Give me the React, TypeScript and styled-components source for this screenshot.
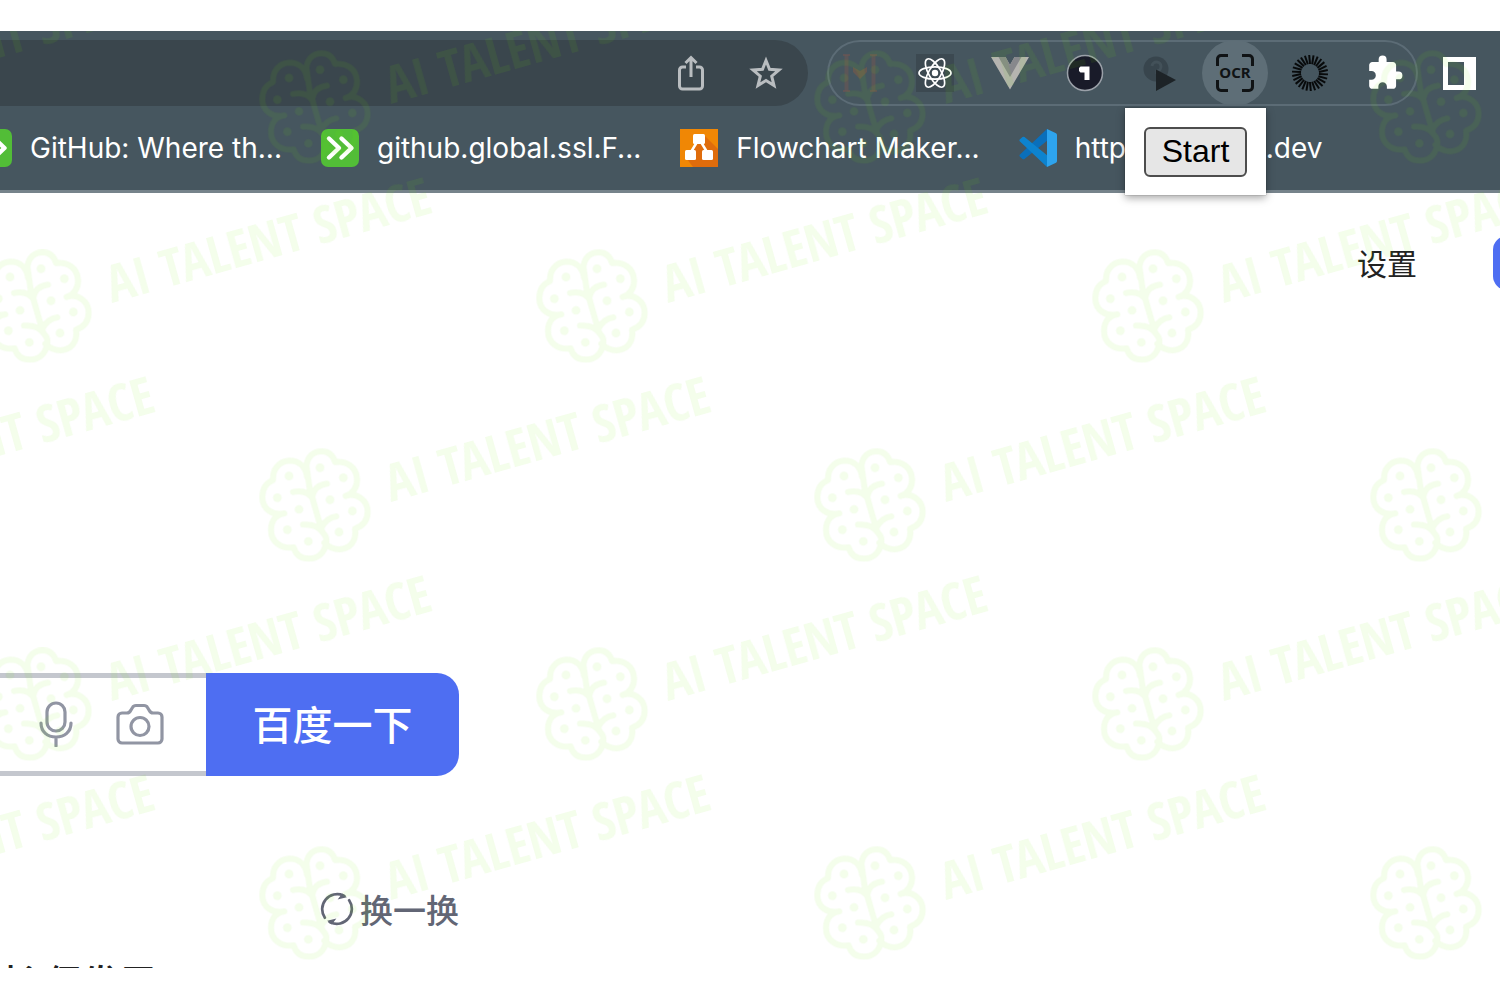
import React from "react";
import styled, { createGlobalStyle } from "styled-components";

const GlobalStyle = createGlobalStyle`
  *, *::before, *::after { box-sizing: border-box; }
  body { margin: 0; background: #fff; }
  button, input { font: inherit; }
  svg { display: block; flex: none; }
`;

const cjk = `"Noto Sans CJK SC", sans-serif`;

const Page = styled.div`
  height: 100vh;
  padding: 31px 0 32px;
  display: flex;
  overflow: hidden;
`;

const Viewport = styled.div`
  position: relative;
  flex: 1;
  min-width: 0;
  overflow: hidden;
  background: #fff;
`;

const BrowserChrome = styled.header`
  padding-top: 9px;
  background: #46565f;
  border-bottom: 3px solid #76838b;
`;

const ToolRow = styled.div`
  display: flex;
  align-items: center;
  padding-right: 24px;
`;

const AddressBar = styled.div`
  flex: 1;
  height: 66px;
  margin-right: 19px;
  padding-right: 25px;
  display: flex;
  align-items: center;
  justify-content: flex-end;
  gap: 45px;
  border-radius: 0 33px 33px 0;
  background: #3a464d;
`;

const IconButton = styled.button`
  padding: 0;
  border: 0;
  background: none;
  color: inherit;
`;

const ExtensionTray = styled.div`
  display: flex;
  gap: 9px;
  margin-right: 25px;
  border-radius: 33px;
  box-shadow: inset 0 0 0 2px #5c6c76;
`;

const ExtensionSlot = styled.div`
  position: relative;
`;

const ExtensionButton = styled(IconButton)<{ $active?: boolean }>`
  width: 66px;
  height: 66px;
  display: grid;
  place-items: center;
  border-radius: 50%;
  background: ${(p) => (p.$active ? "#5e6e77" : "transparent")};
`;

const Popup = styled.div`
  position: absolute;
  top: 68px;
  right: 2px;
  z-index: 3;
  padding: 19px 19px 18px;
  background: #fff;
  box-shadow: 0 3px 8px rgba(0, 0, 0, 0.35), 0 0 1px rgba(0, 0, 0, 0.5);
`;

const StartButton = styled.button`
  display: block;
  width: 103px;
  height: 50px;
  padding: 0 0 2px;
  border: 2px solid #4d4d4d;
  border-radius: 6px;
  background: #e6e6e6;
  color: #000;
  font-family: "Liberation Sans", Arial, sans-serif;
  font-size: 32px;
  line-height: 44px;
`;

const BookmarkBar = styled.nav`
  height: 84px;
  overflow: hidden;
  display: flex;
  align-items: center;
  gap: 39px;
`;

const Bookmark = styled.a<{ $cut?: boolean }>`
  display: flex;
  align-items: center;
  gap: 18px;
  margin-left: ${(p) => (p.$cut ? "-26px" : "0")};
  color: #fff;
  text-decoration: none;
  white-space: nowrap;
  font-family: Inter, sans-serif;
  font-size: 28px;
  line-height: 38px;
`;

const SiteNav = styled.nav`
  display: flex;
  align-items: center;
  justify-content: flex-end;
  gap: 76px;
  padding-top: 43px;
  overflow: hidden;
`;

const NavLink = styled.a`
  color: #222;
  text-decoration: none;
  font-family: ${cjk};
  font-size: 30px;
  line-height: 52px;
  padding-bottom: 2px;
`;

const LoginButton = styled.button`
  width: 110px;
  height: 54px;
  margin-right: -103px;
  border: 0;
  border-radius: 14px;
  background: #4e6ef2;
`;

const SearchColumn = styled.main`
  width: 459px;
  margin-top: 383px;
`;

const SearchForm = styled.form`
  display: flex;
  height: 103px;
`;

const SearchBox = styled.div`
  flex: 1;
  min-width: 0;
  display: flex;
  align-items: center;
  gap: 42px;
  padding: 0 42px 2px 0;
  border: solid #c4c7ce;
  border-width: 5px 0;
  color: #9195a3;
`;

const SearchInput = styled.input`
  flex: 1;
  min-width: 0;
  width: 0;
  padding: 0;
  margin-right: -42px;
  border: 0;
  outline: 0;
  background: transparent;
`;

const SearchButton = styled.button`
  width: 253px;
  padding: 0 0 4px;
  border: 0;
  border-radius: 0 22px 22px 0;
  background: #4e6ef2;
  color: #fff;
  font-family: ${cjk};
  font-size: 40px;
  font-weight: 500;
  line-height: 60px;
`;

const RefreshRow = styled.div`
  display: flex;
  justify-content: flex-end;
  margin-top: 108px;
`;

const RefreshButton = styled(IconButton)`
  display: flex;
  align-items: center;
  gap: 6px;
  color: #626675;
  font-family: ${cjk};
  font-size: 33px;
  font-weight: 500;
  line-height: 50px;
`;

const Headline = styled.a`
  display: block;
  margin-top: 27px;
  color: #222;
  text-decoration: none;
  white-space: nowrap;
  font-family: ${cjk};
  font-size: 37px;
  font-weight: 500;
  line-height: 40px;
`;

const WatermarkLayer = styled.svg`
  position: absolute;
  inset: 0;
  width: 100%;
  height: 100%;
  z-index: 2;
  pointer-events: none;
`;

const WatermarkText = styled.text`
  font-family: "Open Sans Condensed", "Roboto Condensed", sans-serif;
  font-weight: 700;
  font-size: 52px;
`;

const OcrText = styled.text`
  font-family: "Noto Sans", sans-serif;
  font-weight: 700;
  font-size: 15px;
`;

const BRAIN =
  "M204 92C208 62 226 48 250 48C270 48 284 60 290 80C326 76 354 96 356 130C358 154 344 176 322 182C356 170 388 196 388 228C388 254 374 272 350 280C356 318 334 340 304 342C284 342 270 334 258 322" +
  "M252 290C262 300 266 310 264 322C258 352 240 370 212 370C188 370 172 358 166 336C128 342 98 318 98 284C98 256 112 238 138 234C102 242 72 220 72 186C72 160 84 142 104 134C102 102 122 78 152 76C184 76 202 96 206 124" +
  "M204 90L214 160L240 250L252 290M164 170C194 164 212 172 224 192M222 184C226 162 242 148 266 145M194 268C222 266 240 272 252 290M250 276C260 256 274 246 294 243";
const DOTS = [[245, 97], [315, 127], [152, 122], [117, 187], [182, 222], [275, 193], [342, 227], [147, 283], [302, 290], [210, 318]];

const MARKS = [0, 1, 2, 3, 4].flatMap((row) =>
  (row % 2 ? [36, 592, 1148] : [-241, 315, 870, 1426]).map((x) => ({ x, y: 76 + row * 199 }))
);

function Watermark() {
  return (
    <WatermarkLayer aria-hidden="true">
      {MARKS.map(({ x, y }) => (
        <g key={`${x}-${y}`} transform={`translate(${x} ${y})`} fill="#74e800" opacity="0.08">
          <g transform="scale(.3333) translate(-230 -209)">
            <path d={BRAIN} fill="none" stroke="#74e800" strokeWidth="18" strokeLinecap="round" strokeLinejoin="round" />
            {DOTS.map(([cx, cy]) => <circle key={cx} cx={cx} cy={cy} r="13" />)}
          </g>
          <WatermarkText transform="translate(76 -3) rotate(-15.7)">AI TALENT SPACE</WatermarkText>
        </g>
      ))}
    </WatermarkLayer>
  );
}

const ShareIcon = () => (
  <svg width="26" height="36" viewBox="0 0 26 36" fill="none" stroke="#b9bdc0" strokeWidth="3">
    <path d="M8 12H4.500a3 3 0 0 0-3 3v16a3 3 0 0 0 3 3h17a3 3 0 0 0 3-3V15a3 3 0 0 0-3-3H18M13 22V3M7.500 8L13 2.500 18.500 8" />
  </svg>
);

const StarIcon = () => (
  <svg width="34" height="34" viewBox="0 0 34 34" fill="none" stroke="#b9bdc0" strokeWidth="3">
    <path d="M17 4.500L20.500 13.300 30 14 22.700 20.200 25 29.500 17 24.500 9 29.500 11.300 20.200 4 14 13.500 13.300Z" />
  </svg>
);

const MarkupIcon = () => (
  <svg width="38" height="40" viewBox="0 0 38 40" fill="none" stroke="#6a5654" strokeWidth="2">
    <path d="M2 2h7M2 38h7M29 2h7M29 38h7" opacity=".7" />
    <path d="M5.500 2v36M32.500 2v36" strokeWidth="4" opacity=".6" />
    <path d="M12 14l7 4 7-4v5l-7 7-7-7z" fill="#7a5a48" stroke="none" opacity=".6" />
  </svg>
);

const ReactIcon = () => (
  <svg width="38" height="38" viewBox="0 0 38 38" fill="none" stroke="#fff" strokeWidth="1.700">
    <path d="M0 0h38v38H0z" fill="#3c4951" stroke="none" />
    {[0, 60, 120].map((a) => <ellipse key={a} cx="19" cy="19" rx="16" ry="6.200" transform={`rotate(${a} 19 19)`} />)}
    <circle cx="19" cy="19" r="3.200" fill="#fff" stroke="none" />
  </svg>
);

const VueIcon = () => (
  <svg width="38" height="38" viewBox="0 0 38 38">
    <path d="M0 3h14.500L19 11l4.500-8H38L19 35.500z" fill="#b5b4b0" />
    <path d="M7.500 3h7L19 11l4.500-8h7L19 23z" fill="#87888c" />
  </svg>
);

const OneIcon = () => (
  <svg width="38" height="38" viewBox="0 0 38 38">
    <circle cx="19" cy="19" r="17.500" fill="#191b29" stroke="#9aa0a8" strokeWidth="1.500" />
    <path d="M14.500 12.500h9v13.500h-5v-7.500h-4l-1.500-1.500v-3z" fill="#fff" />
  </svg>
);

const PlayIcon = () => (
  <svg width="38" height="38" viewBox="0 0 38 38">
    <circle cx="15" cy="15" r="12.500" fill="#38454d" />
    <path d="M11 12a4.500 4.500 0 1 1 5 5v3" fill="none" stroke="#435159" strokeWidth="3" />
    <path d="M15 15.500l20 10.500-20 11z" fill="#1d2327" />
  </svg>
);

const OcrIcon = () => (
  <svg width="40" height="40" viewBox="0 0 40 40">
    <path d="M2.500 13V6a3.500 3.500 0 0 1 3.500-3.500h7M27 2.500h7A3.500 3.500 0 0 1 37.500 6v7M37.500 27v7a3.500 3.500 0 0 1-3.500 3.500h-7M13 37.500H6A3.500 3.500 0 0 1 2.500 34v-7" fill="none" stroke="#101315" strokeWidth="3" />
    <OcrText x="20" y="25" textAnchor="middle" fill="#101315">OCR</OcrText>
  </svg>
);

const BurstIcon = () => (
  <svg width="38" height="38" viewBox="0 0 38 38" stroke="#080a0b" strokeWidth="2">
    {Array.from({ length: 26 }, (_, i) => (
      <path key={i} d="M19 10L18.200 1" transform={`rotate(${(i * 360) / 26} 19 19)`} />
    ))}
  </svg>
);

const PuzzleIcon = () => (
  <svg width="38" height="38" viewBox="0 0 24 24" fill="#fff">
    <path d="M20.500 11H19V7c0-1.100-.9-2-2-2h-4V3.500a2.500 2.500 0 0 0-5 0V5H4c-1.100 0-1.990.9-1.990 2v3.800H3.500c1.490 0 2.700 1.210 2.700 2.700s-1.210 2.700-2.700 2.700H2V20c0 1.100.9 2 2 2h3.800v-1.500c0-1.490 1.210-2.700 2.700-2.700 1.490 0 2.700 1.210 2.700 2.700V22H17c1.100 0 2-.9 2-2v-4h1.500a2.500 2.500 0 0 0 0-5z" />
  </svg>
);

const SidePanelIcon = () => (
  <svg width="33" height="33" viewBox="0 0 33 33">
    <path d="M0 0h33v33H0zM5 5v23h16V5z" fill="#fff" fillRule="evenodd" />
  </svg>
);

const ChevronsIcon = () => (
  <svg width="38" height="38" viewBox="0 0 38 38">
    <rect width="38" height="38" rx="7" fill="#52bd37" />
    <path d="M8 9.500l10 9.500-10 9.500M20.500 9.500l10 9.500-10 9.500" fill="none" stroke="#fff" strokeWidth="4.400" strokeLinecap="round" strokeLinejoin="round" />
  </svg>
);

const FlowchartIcon = () => (
  <svg width="38" height="38" viewBox="0 0 38 38">
    <path d="M0 0h38v38H0z" fill="#f08705" />
    <path d="M24 6l14 14v18H13l-6-8 9-13z" fill="#df6c0c" />
    <path d="M17 13l-6 10M21 13l6 10" stroke="#fff" strokeWidth="2.500" />
    <g fill="#fff">
      <rect x="13" y="5" width="12" height="10" rx="1.500" />
      <rect x="5" y="21" width="11" height="10" rx="1.500" />
      <rect x="22" y="21" width="11" height="10" rx="1.500" />
    </g>
  </svg>
);

const CodeIcon = () => (
  <svg width="38" height="38" viewBox="0 0 38 38">
    <path d="M28 0L1 25.500a1.500 1.500 0 0 0 0 2.200l2.500 2.200a1.500 1.500 0 0 0 2 0L29 11z" fill="#0a6fbb" />
    <path d="M28 38L1 12.500a1.500 1.500 0 0 1 0-2.200l2.500-2.200a1.500 1.500 0 0 1 2 0L29 27z" fill="#0d83cf" />
    <path d="M28 0l9 4.300a2 2 0 0 1 1 1.700v26a2 2 0 0 1-1 1.700L28 38z" fill="#2ea4ee" />
  </svg>
);

const MicIcon = () => (
  <svg width="36" height="46" viewBox="0 0 36 46" fill="none" stroke="currentColor" strokeWidth="3.200">
    <rect x="9" y="2" width="18" height="28" rx="9" />
    <path d="M3 22c0 9 6.500 14 15 14s15-5 15-14M18 36v9" strokeLinecap="round" />
  </svg>
);

const CameraIcon = () => (
  <svg width="48" height="42" viewBox="0 0 48 42" fill="none" stroke="currentColor" strokeWidth="3.200">
    <path d="M6 10h5c2 0 3-1 4-3l1.500-2.500C17.300 3 18 2.500 20 2.500h8c2 0 2.700.5 3.500 2L33 7c1 2 2 3 4 3h5a4 4 0 0 1 4 4v22a4 4 0 0 1-4 4H6a4 4 0 0 1-4-4V14a4 4 0 0 1 4-4z" />
    <circle cx="24" cy="23.500" r="9" />
  </svg>
);

const RefreshIcon = () => (
  <svg width="34" height="34" viewBox="0 0 35 35" fill="none" stroke="currentColor" strokeWidth="2.800" strokeLinecap="round">
    <path d="M5 26.500A15.500 15.500 0 0 1 24 3.500l1 .500M30 8.500A15.500 15.500 0 0 1 11 31.500l-1-.500" />
    <path d="M20 6.500l6-1.500-3-2.500zM15 28.500l-6 1.500 3 2.500z" fill="currentColor" strokeWidth="1.500" />
  </svg>
);

const EXTENSIONS = [
  { name: "Markup", Icon: MarkupIcon },
  { name: "React Developer Tools", Icon: ReactIcon },
  { name: "Vue.js devtools", Icon: VueIcon },
  { name: "1Password", Icon: OneIcon },
  { name: "Player", Icon: PlayIcon },
  { name: "OCR", Icon: OcrIcon, active: true },
  { name: "Loader", Icon: BurstIcon },
  { name: "Extensions", Icon: PuzzleIcon },
];

const BOOKMARKS = [
  { label: "GitHub: Where th...", Icon: ChevronsIcon },
  { label: "github.global.ssl.F...", Icon: ChevronsIcon },
  { label: "Flowchart Maker...", Icon: FlowchartIcon },
  { label: "https://vscode.dev", Icon: CodeIcon },
];

export default function App() {
  return (
    <Page>
      <GlobalStyle />
      <Viewport>
        <BrowserChrome>
          <ToolRow>
            <AddressBar>
              <IconButton aria-label="Share"><ShareIcon /></IconButton>
              <IconButton aria-label="Bookmark this tab"><StarIcon /></IconButton>
            </AddressBar>
            <ExtensionTray>
              {EXTENSIONS.map(({ name, Icon, active }) => (
                <ExtensionSlot key={name}>
                  <ExtensionButton aria-label={name} $active={active}><Icon /></ExtensionButton>
                  {active && <Popup><StartButton>Start</StartButton></Popup>}
                </ExtensionSlot>
              ))}
            </ExtensionTray>
            <IconButton aria-label="Side panel"><SidePanelIcon /></IconButton>
          </ToolRow>
          <BookmarkBar aria-label="Bookmarks">
            {BOOKMARKS.map(({ label, Icon }, i) => (
              <Bookmark key={label} href="#" $cut={i === 0}><Icon />{label}</Bookmark>
            ))}
          </BookmarkBar>
        </BrowserChrome>

        <SiteNav>
          <NavLink href="#">设置</NavLink>
          <LoginButton aria-label="登录" />
        </SiteNav>

        <SearchColumn>
          <SearchForm onSubmit={(e) => e.preventDefault()}>
            <SearchBox>
              <SearchInput aria-label="搜索" />
              <IconButton type="button" aria-label="语音"><MicIcon /></IconButton>
              <IconButton type="button" aria-label="图片"><CameraIcon /></IconButton>
            </SearchBox>
            <SearchButton type="submit">百度一下</SearchButton>
          </SearchForm>
          <RefreshRow>
            <RefreshButton><RefreshIcon />换一换</RefreshButton>
          </RefreshRow>
          <Headline href="#">长 保发展</Headline>
        </SearchColumn>

        <Watermark />
      </Viewport>
    </Page>
  );
}
